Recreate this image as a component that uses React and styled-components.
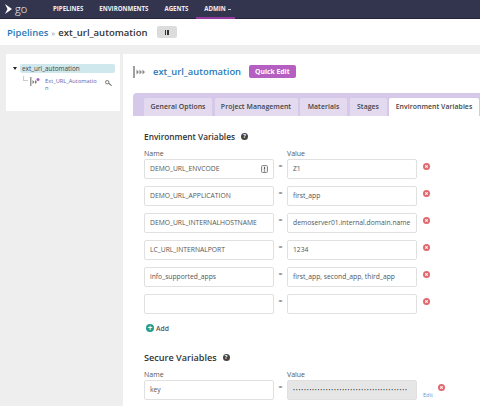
import React from "react";
import styled, { createGlobalStyle } from "styled-components";

const Global = createGlobalStyle`
  html, body {
    margin: 0;
    padding: 0;
    height: 406px;
    overflow: hidden;
    background: #eeeeee;
    font-family: "Open Sans", "Liberation Sans", sans-serif;
    color: #333;
  }
  * { box-sizing: border-box; }
  svg { display: block; flex: none; }
`;

const Page = styled.div`
  width: 480px;
  height: 406px;
  overflow: hidden;
  display: flex;
  flex-direction: column;
`;

const Header = styled.div`
  height: 19px;
  flex: none;
  background: #33354f;
  border-bottom: 1px solid #23243a;
  display: flex;
  align-items: center;
  padding-left: 5px;
`;

const Logo = styled.div`
  width: 24px;
  height: 14px;
  margin-right: 24px;
  display: flex;
  align-items: center;
  gap: 2px;
  color: #fff;
  font-size: 11px;
  font-weight: 300;
  line-height: 14px;
`;

const NavItem = styled.div`
  height: 19px;
  line-height: 17px;
  font-size: 6.1px;
  font-weight: 700;
  color: #f0f0f4;
  margin-right: 16px;
  position: relative;
  display: flex;
  align-items: flex-start;
  gap: 2px;
  ${(p) =>
    p.$active &&
    `
    &::after {
      content: "";
      position: absolute;
      left: -8px;
      right: -4px;
      bottom: 0;
      height: 2px;
      background: #943a9e;
    }
  `}
`;

const Caret = styled.span`
  width: 3px;
  height: 1px;
  margin-top: 9px;
  background: #c8c8d2;
`;

const TitleBar = styled.div`
  height: 26px;
  flex: none;
  background: #fff;
  display: flex;
  align-items: center;
  padding: 0 0 0 7px;
  font-size: 9.5px;
  font-weight: 600;
`;

const Crumb = styled.span`
  color: #2a7ab8;
`;

const Sep = styled.span`
  color: #999;
  margin: 0 3px;
  font-size: 8px;
  font-weight: 400;
`;

const PauseButton = styled.div`
  width: 20px;
  height: 12px;
  margin-left: 9px;
  background: #dcdcdc;
  border-radius: 2px;
  display: flex;
  align-items: center;
  justify-content: center;
  gap: 1px;
  i {
    width: 1.5px;
    height: 5px;
    background: #333;
  }
`;

const Body = styled.div`
  flex: 1;
  display: flex;
  align-items: flex-start;
  gap: 3px;
  padding: 9px 0 0 6px;
`;

const TreePanel = styled.div`
  width: 114px;
  height: 57px;
  flex: none;
  background: #fff;
  padding: 10px 5px 0 7px;
`;

const TreeRoot = styled.div`
  display: flex;
  align-items: center;
  gap: 3px;
  font-size: 6.4px;
  color: #444;
  &::before {
    content: "";
    border-left: 2.5px solid transparent;
    border-right: 2.5px solid transparent;
    border-top: 3px solid #222;
    flex: none;
  }
`;

const TreeLabel = styled.div`
  flex: 1;
  height: 9px;
  line-height: 9px;
  border-radius: 2px;
  background: #cfe8ee;
  padding-left: 2px;
`;

const TreeChild = styled.div`
  display: flex;
  align-items: flex-start;
  margin: 3px 0 0 10px;
`;

const Connector = styled.div`
  width: 5px;
  height: 5px;
  margin-right: 2px;
  border-left: 1px solid #ccc;
  border-bottom: 1px solid #ccc;
`;

const TreeLink = styled.div`
  width: 53px;
  font-size: 5.7px;
  line-height: 7px;
  color: #5a5fb8;
  margin: 2px 7px 0 5px;
  word-break: break-all;
`;

const SearchIcon = styled.span`
  margin-top: 4px;
`;

const MainPanel = styled.div`
  flex: 1;
  height: 360px;
  background: #fff;
  padding: 0 0 0 10px;
  overflow: hidden;
`;

const PipelineHead = styled.div`
  height: 39px;
  display: flex;
  align-items: center;
  padding: 0 0 4px 0;
  gap: 8px;
`;

const PipelineName = styled.span`
  font-size: 9.4px;
  font-weight: 600;
  color: #2a7ab8;
`;

const QuickEdit = styled.div`
  height: 13px;
  line-height: 13px;
  padding: 0 6px;
  background: #b55fc3;
  color: #fff;
  border-radius: 2px;
  font-size: 6.8px;
  font-weight: 700;
`;

const TabBar = styled.div`
  height: 23px;
  display: flex;
  gap: 2.5px;
  padding: 5px 0 0 11px;
  background: #d6c8e8;
  border-radius: 4px 0 0 0;
`;

const Tab = styled.div`
  height: 18px;
  line-height: 18px;
  width: ${(p) => p.$w}px;
  text-align: center;
  font-size: 6.9px;
  font-weight: 600;
  letter-spacing: 0.05px;
  color: #444;
  border-radius: 2px 2px 0 0;
  background: ${(p) => (p.$active ? "#fff" : "#e3daf0")};
`;

const Form = styled.div`
  padding: 14px 0 0 11px;
`;

const SectionTitle = styled.div`
  height: 13px;
  line-height: 13px;
  font-size: ${(p) => p.$size}px;
  font-weight: 600;
  color: #333;
  display: flex;
  align-items: center;
  gap: 6px;
`;

const HelpIcon = styled.span`
  width: 7px;
  height: 7px;
  border-radius: 50%;
  background: #444;
  color: #fff;
  font-size: 5.5px;
  line-height: 7px;
  font-weight: 700;
  text-align: center;
`;

const Grid = styled.div`
  display: grid;
  grid-template-columns: 130px 13px 130px auto;
  grid-auto-rows: 20px;
  row-gap: 7px;
`;

const ColHead = styled.div`
  display: grid;
  grid-template-columns: 130px 13px 130px;
  height: 10px;
  line-height: 10px;
  font-size: 7px;
  color: #555;
  margin: 6px 0 0;
`;

const Field = styled.div`
  height: 20px;
  line-height: 18px;
  padding: 0 5px;
  border: 1px solid #e0e0e0;
  border-radius: 2px;
  background: ${(p) => (p.$secure ? "#e6e6e6" : "#fff")};
  font-size: 6.75px;
  color: #555;
  white-space: nowrap;
  overflow: hidden;
  display: flex;
  align-items: center;
  justify-content: space-between;
`;

const Eq = styled.div`
  font-size: 7px;
  line-height: 14px;
  text-align: center;
  color: #555;
`;

const Actions = styled.div`
  display: flex;
  align-items: flex-start;
  padding: 4px 0 0 6px;
  gap: 5px;
`;

const EditLink = styled.span`
  color: #5f9bd1;
  font-size: 5.6px;
  line-height: 8px;
  margin: 7px 0 0 0;
`;

const AddRow = styled.div`
  display: flex;
  align-items: center;
  gap: 2px;
  height: 10px;
  margin: 9px 0 0 2px;
  font-size: 6.8px;
  font-weight: 600;
  color: #555;
`;

const AddIcon = styled.span`
  width: 8px;
  height: 8px;
  border-radius: 50%;
  background: #1f9e8f;
  color: #fff;
  font-size: 8px;
  line-height: 7px;
  font-weight: 700;
  text-align: center;
`;

const SecureSection = styled.div`
  margin-top: 18px;
`;

const Dots = styled.span`
  letter-spacing: 0.85px;
  font-size: 5px;
  color: #444;
`;

const RemoveIcon = () => (
  <svg width="7" height="7" viewBox="0 0 8 8">
    <circle cx="4" cy="4" r="4" fill="#e0686e" />
    <path d="M2.6 2.6l2.8 2.8M5.4 2.6L2.6 5.4" stroke="#fff" strokeWidth="1.2" />
  </svg>
);

const PipelineGlyph = () => (
  <svg width="12" height="12" viewBox="0 0 12 12">
    <rect x="0" y="0" width="2" height="12" fill="#a0a0a0" />
    <path d="M3.5 3.5l2.5 2.5-2.5 2.5zM6.5 3.5l2.5 2.5-2.5 2.5zM9.5 3.5l2.5 2.5-2.5 2.5z" fill="#888" />
  </svg>
);

const TreeGlyph = () => (
  <svg width="10" height="10" viewBox="0 0 10 10">
    <rect x="0" y="1" width="1.5" height="9" fill="#999" />
    <path d="M2.5 4l2 2-2 2zM5 4l2 2-2 2z" fill="#777" />
    <circle cx="8" cy="3.5" r="1.5" fill="#a45cc0" />
  </svg>
);

const rows = [
  ["DEMO_URL_ENVCODE", "Z1", true],
  ["DEMO_URL_APPLICATION", "first_app"],
  ["DEMO_URL_INTERNALHOSTNAME", "demoserver01.internal.domain.name"],
  ["LC_URL_INTERNALPORT", "1234"],
  ["info_supported_apps", "first_app, second_app, third_app"],
  ["", ""],
];

const tabs = [
  ["General Options", 68],
  ["Project Management", 83],
  ["Materials", 47],
  ["Stages", 37],
  ["Environment Variables", 90, true],
];

export default function App() {
  return (
    <Page>
      <Global />
      <Header>
        <Logo>
          <svg width="8" height="10" viewBox="0 0 8 10">
            <path d="M0 0l7 5-7 5 2.5-5z" fill="#fff" />
          </svg>
          <span>go</span>
        </Logo>
        <NavItem>PIPELINES</NavItem>
        <NavItem>ENVIRONMENTS</NavItem>
        <NavItem>AGENTS</NavItem>
        <NavItem $active>
          ADMIN <Caret />
        </NavItem>
      </Header>
      <TitleBar>
        <Crumb>Pipelines</Crumb>
        <Sep>»</Sep>
        <span>ext_url_automation</span>
        <PauseButton>
          <i />
          <i />
        </PauseButton>
      </TitleBar>
      <Body>
        <TreePanel>
          <TreeRoot>
            <TreeLabel>ext_url_automation</TreeLabel>
          </TreeRoot>
          <TreeChild>
            <Connector />
            <TreeGlyph />
            <TreeLink>Ext_URL_Automation</TreeLink>
            <SearchIcon>
              <svg width="7" height="6" viewBox="0 0 7 6">
                <circle cx="2.2" cy="2.2" r="1.7" fill="none" stroke="#777" />
                <path d="M3.6 3.3L6.6 5.6" stroke="#777" strokeWidth="1.1" />
              </svg>
            </SearchIcon>
          </TreeChild>
        </TreePanel>
        <MainPanel>
          <PipelineHead>
            <PipelineGlyph />
            <PipelineName>ext_url_automation</PipelineName>
            <QuickEdit>Quick Edit</QuickEdit>
          </PipelineHead>
          <TabBar>
            {tabs.map(([label, w, active]) => (
              <Tab key={label} $w={w} $active={active}>
                {label}
              </Tab>
            ))}
          </TabBar>
          <Form>
            <SectionTitle $size={8.3}>
              Environment Variables <HelpIcon>?</HelpIcon>
            </SectionTitle>
            <ColHead>
              <span>Name</span>
              <span />
              <span>Value</span>
            </ColHead>
            <Grid>
              {rows.map(([name, value, icon], i) => (
                <React.Fragment key={i}>
                  <Field>
                    {name}
                    {icon && (
                      <svg width="7" height="8" viewBox="0 0 7 8">
                        <rect x="0.5" y="0.5" width="6" height="7" rx="1" fill="#eee" stroke="#888" />
                        <path d="M3.5 2v2.5M3.5 5.5v1" stroke="#555" />
                      </svg>
                    )}
                  </Field>
                  <Eq>=</Eq>
                  <Field>{value}</Field>
                  <Actions>
                    <RemoveIcon />
                  </Actions>
                </React.Fragment>
              ))}
            </Grid>
            <AddRow>
              <AddIcon>+</AddIcon>
              Add
            </AddRow>
            <SecureSection>
              <SectionTitle $size={9.1}>
                Secure Variables <HelpIcon>?</HelpIcon>
              </SectionTitle>
              <ColHead>
                <span>Name</span>
                <span />
                <span>Value</span>
              </ColHead>
              <Grid>
                <Field>key</Field>
                <Eq>=</Eq>
                <Field $secure>
                  <Dots>••••••••••••••••••••••••••••••••••••••••••</Dots>
                </Field>
                <Actions>
                  <EditLink>Edit</EditLink>
                  <RemoveIcon />
                </Actions>
              </Grid>
            </SecureSection>
          </Form>
        </MainPanel>
      </Body>
    </Page>
  );
}
